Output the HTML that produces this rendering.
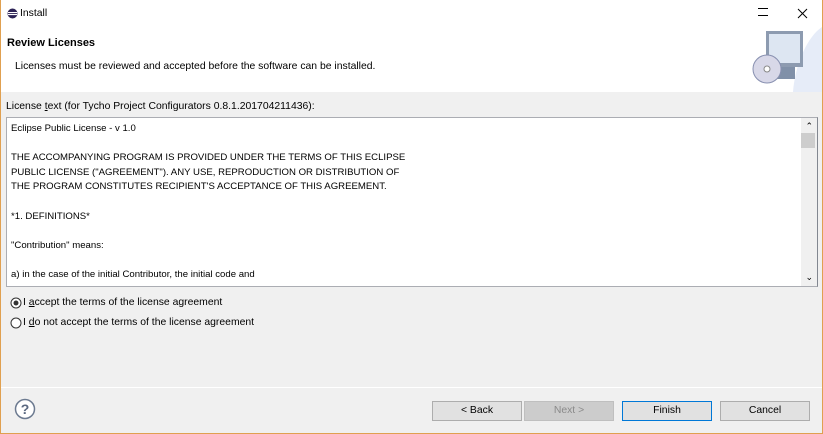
<!DOCTYPE html><html><head><style>
*{margin:0;padding:0;box-sizing:border-box}
body{width:823px;height:434px;overflow:hidden;background:#f0f0f0;font-family:"Liberation Sans",sans-serif;font-size:10.4px;color:#000;position:relative}
.a{position:absolute}
.btn{position:absolute;top:401px;width:90px;height:20px;background:#e1e1e1;border:1px solid #adadad;text-align:center;line-height:18px;font-size:10.4px}
</style></head><body>
<div class="a" style="left:0;top:0;width:823px;height:92px;background:#fff"></div>
<svg class="a" style="left:7px;top:8px" width="11" height="11"><circle cx="5.5" cy="5.5" r="5" fill="#2c2255"/><rect x="1" y="4" width="9" height="1.1" fill="#fff"/><rect x="1" y="6" width="9" height="1.1" fill="#fff"/></svg>
<div class="a" style="left:20px;top:8px">Install</div>
<div class="a" style="left:758px;top:8px;width:10px;height:1px;background:#000"></div>
<div class="a" style="left:758px;top:15px;width:10px;height:1px;background:#000"></div>
<svg class="a" style="left:797px;top:8px" width="11" height="11"><path d="M1 1L10 10M10 1L1 10" stroke="#000" stroke-width="1"/></svg>
<div class="a" style="left:7px;top:37px;font-weight:bold;font-size:11px">Review Licenses</div>
<div class="a" style="left:15px;top:61px">Licenses must be reviewed and accepted before the software can be installed.</div>
<svg class="a" style="left:745px;top:25px" width="77" height="67"><path d="M48 67 C50 40 62 12 77 2 V67Z" fill="#e6ecf8"/><rect x="21" y="6" width="37" height="36" fill="#8d9bb0"/><rect x="24" y="9" width="31" height="29" fill="#dde6f2"/><rect x="28" y="42" width="22" height="12" fill="#8090a8"/><circle cx="22" cy="44" r="14" fill="#d8d8e8" stroke="#8890b0"/><circle cx="22" cy="44" r="3" fill="#fff" stroke="#888"/></svg>
<div class="a" style="left:6px;top:101px">License <u>t</u>ext (for Tycho Project Configurators 0.8.1.201704211436):</div>
<div class="a" style="left:6px;top:117px;width:812px;height:170px;background:#fff;border:1px solid #abadb3;border-right:1px solid #828790;overflow:hidden;line-height:14.6px;padding:4px 0 0 4px;font-size:9.6px">
Eclipse Public License - v 1.0<br><br>THE ACCOMPANYING PROGRAM IS PROVIDED UNDER THE TERMS OF THIS ECLIPSE<br>PUBLIC LICENSE ("AGREEMENT"). ANY USE, REPRODUCTION OR DISTRIBUTION OF<br>THE PROGRAM CONSTITUTES RECIPIENT'S ACCEPTANCE OF THIS AGREEMENT.<br><br>*1. DEFINITIONS*<br><br>"Contribution" means:<br><br>a) in the case of the initial Contributor, the initial code and
<div class="a" style="right:0;top:0;width:16px;height:168px;background:#f0f0f0"></div>
<div class="a" style="right:2px;top:15px;width:14px;height:15px;background:#cdcdcd"></div>
<div class="a" style="right:4px;top:1px;font-size:9px">&#8963;</div>
<div class="a" style="right:4px;top:152px;font-size:9px">&#8964;</div>
</div>
<svg class="a" style="left:10px;top:297px" width="12" height="12"><circle cx="6" cy="6" r="5" fill="#fff" stroke="#333"/><circle cx="6" cy="6" r="2.5" fill="#333"/></svg>
<div class="a" style="left:23px;top:297px">I <u>a</u>ccept the terms of the license agreement</div>
<svg class="a" style="left:10px;top:317px" width="12" height="12"><circle cx="6" cy="6" r="5" fill="#fff" stroke="#333"/></svg>
<div class="a" style="left:23px;top:317px">I <u>d</u>o not accept the terms of the license agreement</div>
<div class="a" style="left:1px;top:387px;width:821px;height:1px;background:#fff"></div>
<svg class="a" style="left:14px;top:398px" width="22" height="22"><circle cx="11" cy="11" r="9.5" fill="#fff" stroke="#6c7a90" stroke-width="1.5"/><text x="11" y="16" text-anchor="middle" font-family="Liberation Sans" font-weight="bold" font-size="14" fill="#5a6880">?</text></svg>
<div class="btn" style="left:432px">&lt; Back</div>
<div class="btn" style="left:524px;background:#cccccc;border-color:#bfbfbf;color:#8a8a8a">Next &gt;</div>
<div class="btn" style="left:622px;border-color:#0078d7">Finish</div>
<div class="btn" style="left:720px">Cancel</div>
<div class="a" style="left:0;top:0;width:1px;height:434px;background:#e0a050"></div>
<div class="a" style="right:0;top:0;width:1px;height:434px;background:#e0a050"></div>
<div class="a" style="left:0;bottom:0;width:823px;height:1px;background:#e0a050"></div>
</body></html>
